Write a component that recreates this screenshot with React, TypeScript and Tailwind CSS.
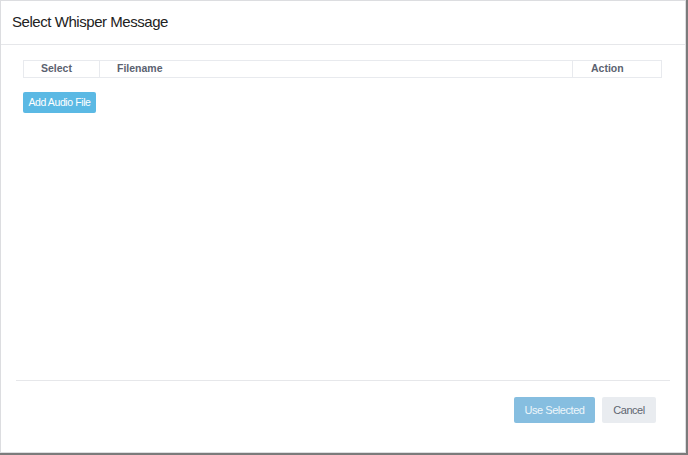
export default function App() {
  return (
    <div className="w-[688px] h-[455px] bg-[#7b7b7b] font-['Liberation_Sans',Arial,sans-serif]">
      <div className="w-[686px] h-[453px] bg-white border border-[#dcdde0] flex flex-col">
        {/* header */}
        <div className="h-[44px] border-b border-[#e6e7ea] flex items-center px-[11px]">
          <h1 className="text-[15px] tracking-[-0.45px] text-[#222]">Select Whisper Message</h1>
        </div>

        {/* body */}
        <div className="flex-1 pt-[15px] pl-[22px] pr-[23px]">
          <table className="w-full border-collapse text-[10.5px] font-bold text-[#5b6270]">
            <thead>
              <tr className="h-[17px]">
                <th className="w-[76px] border border-[#e8eaee] text-left pl-[17px] font-bold">Select</th>
                <th className="border border-[#e8eaee] text-left pl-[17px] font-bold">Filename</th>
                <th className="w-[89px] border border-[#e8eaee] text-left pl-[18px] font-bold">Action</th>
              </tr>
            </thead>
            <tbody></tbody>
          </table>
          <button className="mt-[14px] h-[21px] w-[73px] rounded-[2px] bg-[#5bb9e4] text-white text-[10.5px] tracking-[-0.4px]">
            Add Audio File
          </button>
        </div>

        {/* footer */}
        <div className="mx-[15px] border-t border-[#e6e7ea] h-[72px] flex justify-end items-start pt-[16px] pr-[14px] gap-[7px]">
          <button className="h-[26px] w-[81px] rounded-[2px] bg-[#86bee0] text-[#eef6fb] text-[11px] tracking-[-0.45px]">
            Use Selected
          </button>
          <button className="h-[26px] w-[54px] rounded-[2px] bg-[#e9ecf0] text-[#5f6670] text-[11px] tracking-[-0.45px]">
            Cancel
          </button>
        </div>
      </div>
    </div>
  )
}
